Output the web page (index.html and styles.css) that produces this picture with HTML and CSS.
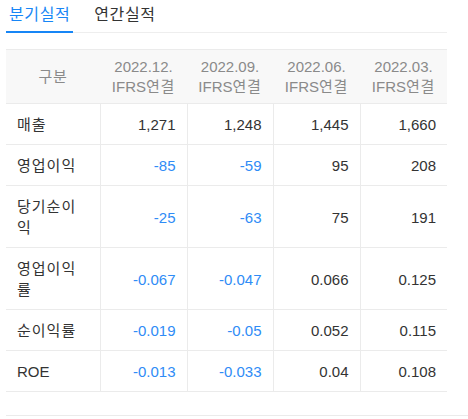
FILE: index.html
```html
<!DOCTYPE html>
<html lang="ko">
<head>
<meta charset="utf-8">
<link rel="stylesheet" href="styles.css">
</head>
<body>
<div class="wrap">
  <div class="tabs">
    <div class="tab active">분기실적</div>
    <div class="tab">연간실적</div>
  </div>
  <table class="fin">
    <colgroup>
      <col class="c-label"><col class="c-val"><col class="c-val3"><col class="c-val"><col class="c-val">
    </colgroup>
    <thead>
      <tr>
        <th class="kr">구분</th>
        <th>2022.12.<br>IFRS<span class="kr">연결</span></th>
        <th>2022.09.<br>IFRS<span class="kr">연결</span></th>
        <th>2022.06.<br>IFRS<span class="kr">연결</span></th>
        <th>2022.03.<br>IFRS<span class="kr">연결</span></th>
      </tr>
    </thead>
    <tbody>
      <tr><td>매출</td><td>1,271</td><td>1,248</td><td>1,445</td><td>1,660</td></tr>
      <tr><td>영업이익</td><td class="neg">-85</td><td class="neg">-59</td><td>95</td><td>208</td></tr>
      <tr><td>당기순이익</td><td class="neg">-25</td><td class="neg">-63</td><td>75</td><td>191</td></tr>
      <tr><td>영업이익률</td><td class="neg">-0.067</td><td class="neg">-0.047</td><td>0.066</td><td>0.125</td></tr>
      <tr><td>순이익률</td><td class="neg">-0.019</td><td class="neg">-0.05</td><td>0.052</td><td>0.115</td></tr>
      <tr><td class="latin">ROE</td><td class="neg">-0.013</td><td class="neg">-0.033</td><td>0.04</td><td>0.108</td></tr>
    </tbody>
  </table>
  <div class="bottom-line"></div>
</div>
</body>
</html>
```
FILE: styles.css
```css
html, body {
  margin: 0;
  padding: 0;
  background: #fff;
}
body {
  font-family: "Liberation Sans", "Noto Sans CJK KR", sans-serif;
  font-size: 15px;
  color: #333;
}
.wrap {
  padding-left: 6px;
}
.kr {
  letter-spacing: 0.8px;
}
.tabs {
  display: flex;
  width: 441px;
  height: 32px;
  border-bottom: 1px solid #eeeeee;
  gap: 18px;
}
.tab {
  padding: 3px 3px 0 3px;
  line-height: 24px;
  font-size: 16px;
  letter-spacing: 0.6px;
  color: #333;
}
.tab.active {
  color: #1786f6;
  border-bottom: 2px solid #1786f6;
  margin-bottom: -1px;
}
.fin {
  margin-top: 16px;
  width: 441px;
  border-collapse: collapse;
  table-layout: fixed;
}
.c-label { width: 94px; }
.c-val { width: 87px; }
.c-val3 { width: 86px; }
.fin th {
  background: #f8f8f8;
  color: #8a8a8a;
  font-weight: normal;
  line-height: 20px;
  padding: 7px 4px 6px;
  text-align: center;
  border-top: 1px solid #ebebeb;
  border-bottom: 1px solid #ebebeb;
}
.fin td {
  padding: 10px 11px 9px;
  line-height: 21px;
  text-align: right;
  border-bottom: 1px solid #ebebeb;
  border-left: 1px solid #ebebeb;
  vertical-align: middle;
}
.fin td:first-child {
  text-align: left;
  border-left: none;
  letter-spacing: 1px;
}
.fin td.latin {
  letter-spacing: 0;
}
.fin td.neg {
  color: #2f8cf6;
}
.bottom-line {
  margin-top: 23px;
  border-top: 1px solid #ebebeb;
}
```
